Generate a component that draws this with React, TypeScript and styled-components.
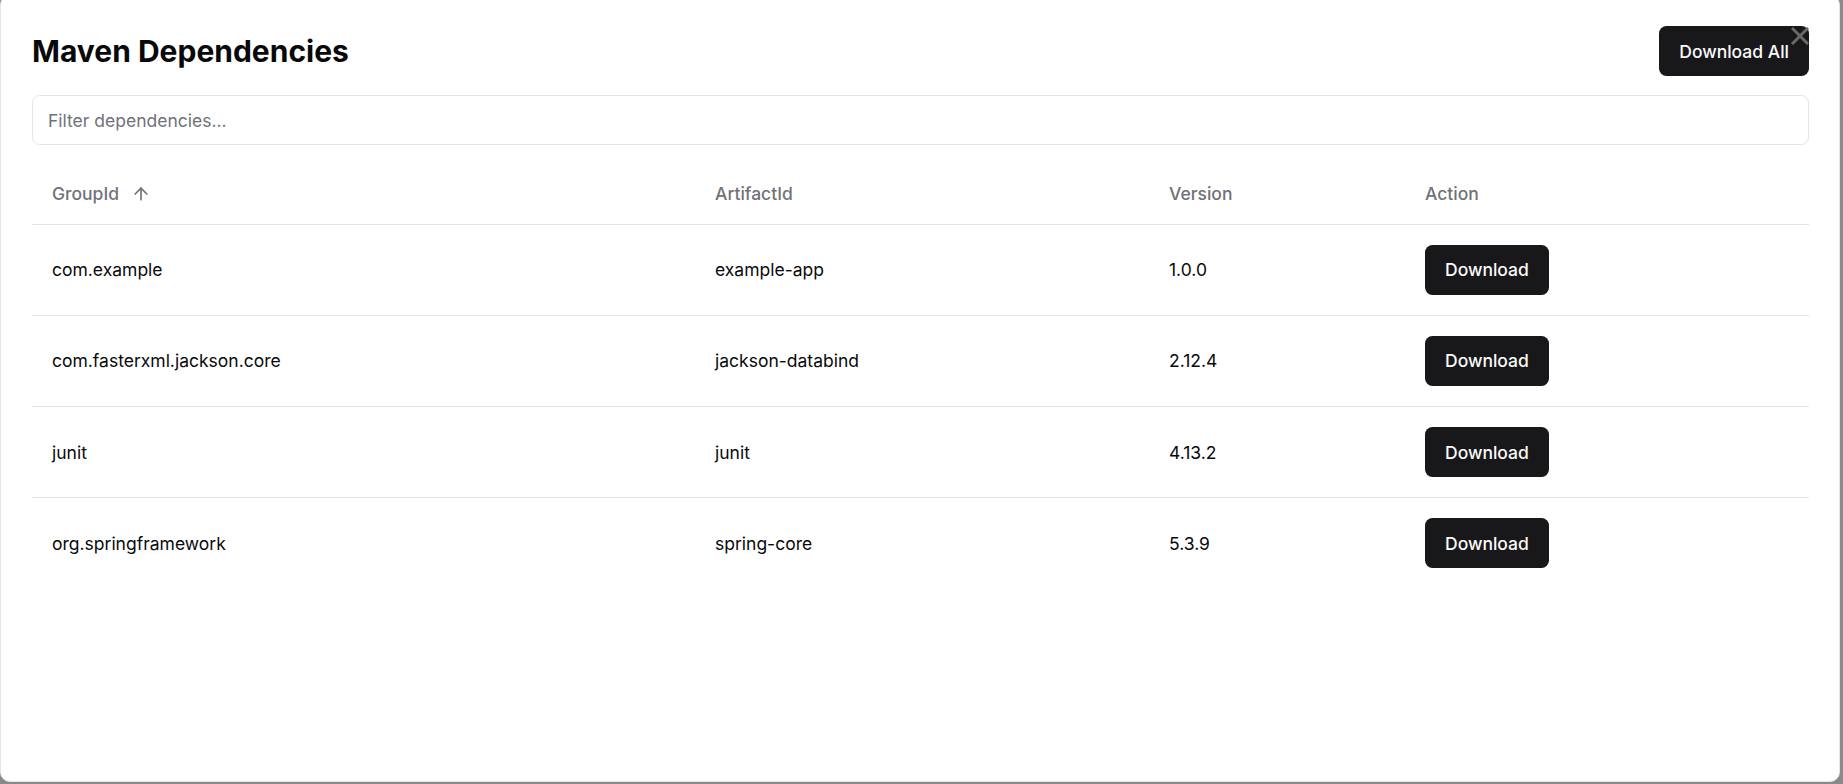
import React from "react";
import styled, { createGlobalStyle } from "styled-components";

const GlobalStyle = createGlobalStyle`
  html, body {
    margin: 0;
    padding: 0;
    width: 100%;
    height: 100%;
    overflow: hidden;
    background: #8a8a8a;
    font-family: Inter, "Noto Sans", "Liberation Sans", sans-serif;
    color: #09090b;
  }
  * { box-sizing: border-box; }
`;

const Backdrop = styled.div`
  position: fixed;
  inset: 0;
  background: #8a8a8a;
`;

const Dialog = styled.div`
  position: fixed;
  top: -5px;
  left: 0;
  width: 1840px;
  height: 787px;
  background: #ffffff;
  border: 1px solid #e4e4e7;
  border-radius: 10px;
  padding: 30px 30px 30px 31px;
  display: flex;
  flex-direction: column;
  gap: 19px;
`;

const HeaderBar = styled.div`
  display: flex;
  align-items: center;
  justify-content: space-between;
`;

const Title = styled.h2`
  margin: 0;
  font-size: 30px;
  font-weight: 700;
  line-height: 1.2;
  letter-spacing: 0;
  color: #09090b;
`;

const DarkButton = styled.button`
  height: 50px;
  padding: 0 20px;
  border: none;
  border-radius: 7.5px;
  background: #18181b;
  color: #fafafa;
  font-family: inherit;
  font-size: 17.5px;
  font-weight: 500;
  cursor: pointer;
  white-space: nowrap;
`;

const FilterInput = styled.input`
  height: 50px;
  width: 100%;
  padding: 0 15px;
  border: 1px solid #e4e4e7;
  border-radius: 7.5px;
  font-family: inherit;
  font-size: 17.5px;
  color: #09090b;
  background: #ffffff;
  outline: none;
  &::placeholder {
    color: #71717a;
  }
`;

const Table = styled.table`
  width: 100%;
  border-collapse: collapse;
  table-layout: fixed;
  font-size: 17.5px;
`;

const HeadRow = styled.tr`
  border-bottom: 1px solid #e4e4e7;
`;

const HeadCell = styled.th`
  height: 60px;
  padding: 0 20px;
  text-align: left;
  font-weight: 500;
  color: #71717a;
  vertical-align: middle;
`;

const SortLabel = styled.span`
  display: inline-flex;
  align-items: center;
  gap: 12px;
`;

const BodyRow = styled.tr`
  border-bottom: 1px solid #e4e4e7;
  &:last-child {
    border-bottom: none;
  }
`;

const BodyCell = styled.td`
  padding: 20px 20px 20.3px;
  vertical-align: middle;
  color: #09090b;
`;

const CloseButton = styled.button`
  position: absolute;
  top: 31px;
  right: 30px;
  width: 18px;
  height: 18px;
  padding: 0;
  border: none;
  background: transparent;
  display: flex;
  cursor: pointer;
`;

const deps = [
  { groupId: "com.example", artifactId: "example-app", version: "1.0.0" },
  { groupId: "com.fasterxml.jackson.core", artifactId: "jackson-databind", version: "2.12.4" },
  { groupId: "junit", artifactId: "junit", version: "4.13.2" },
  { groupId: "org.springframework", artifactId: "spring-core", version: "5.3.9" },
];

const ArrowUp = () => (
  <svg width="20" height="20" viewBox="0 0 24 24" fill="none" stroke="currentColor" strokeWidth="2" strokeLinecap="round" strokeLinejoin="round">
    <path d="m5 12 7-7 7 7" />
    <path d="M12 19V5" />
  </svg>
);

export default function App() {
  return (
    <>
      <GlobalStyle />
      <Backdrop />
      <Dialog>
        <HeaderBar>
          <Title>Maven Dependencies</Title>
          <DarkButton>Download All</DarkButton>
        </HeaderBar>
        <FilterInput placeholder="Filter dependencies..." />
        <Table>
          <colgroup>
            <col style={{ width: "663px" }} />
            <col style={{ width: "454px" }} />
            <col style={{ width: "256px" }} />
            <col />
          </colgroup>
          <thead>
            <HeadRow>
              <HeadCell>
                <SortLabel>
                  GroupId
                  <ArrowUp />
                </SortLabel>
              </HeadCell>
              <HeadCell>ArtifactId</HeadCell>
              <HeadCell>Version</HeadCell>
              <HeadCell>Action</HeadCell>
            </HeadRow>
          </thead>
          <tbody>
            {deps.map((d) => (
              <BodyRow key={d.groupId}>
                <BodyCell>{d.groupId}</BodyCell>
                <BodyCell>{d.artifactId}</BodyCell>
                <BodyCell>{d.version}</BodyCell>
                <BodyCell>
                  <DarkButton>Download</DarkButton>
                </BodyCell>
              </BodyRow>
            ))}
          </tbody>
        </Table>
        <CloseButton aria-label="Close">
          <svg width="18" height="18" viewBox="0 0 18 18" fill="none" stroke="#686868" strokeWidth="3" strokeLinecap="square">
            <path d="M2 2 16 16" />
            <path d="M16 2 2 16" />
          </svg>
        </CloseButton>
      </Dialog>
    </>
  );
}
